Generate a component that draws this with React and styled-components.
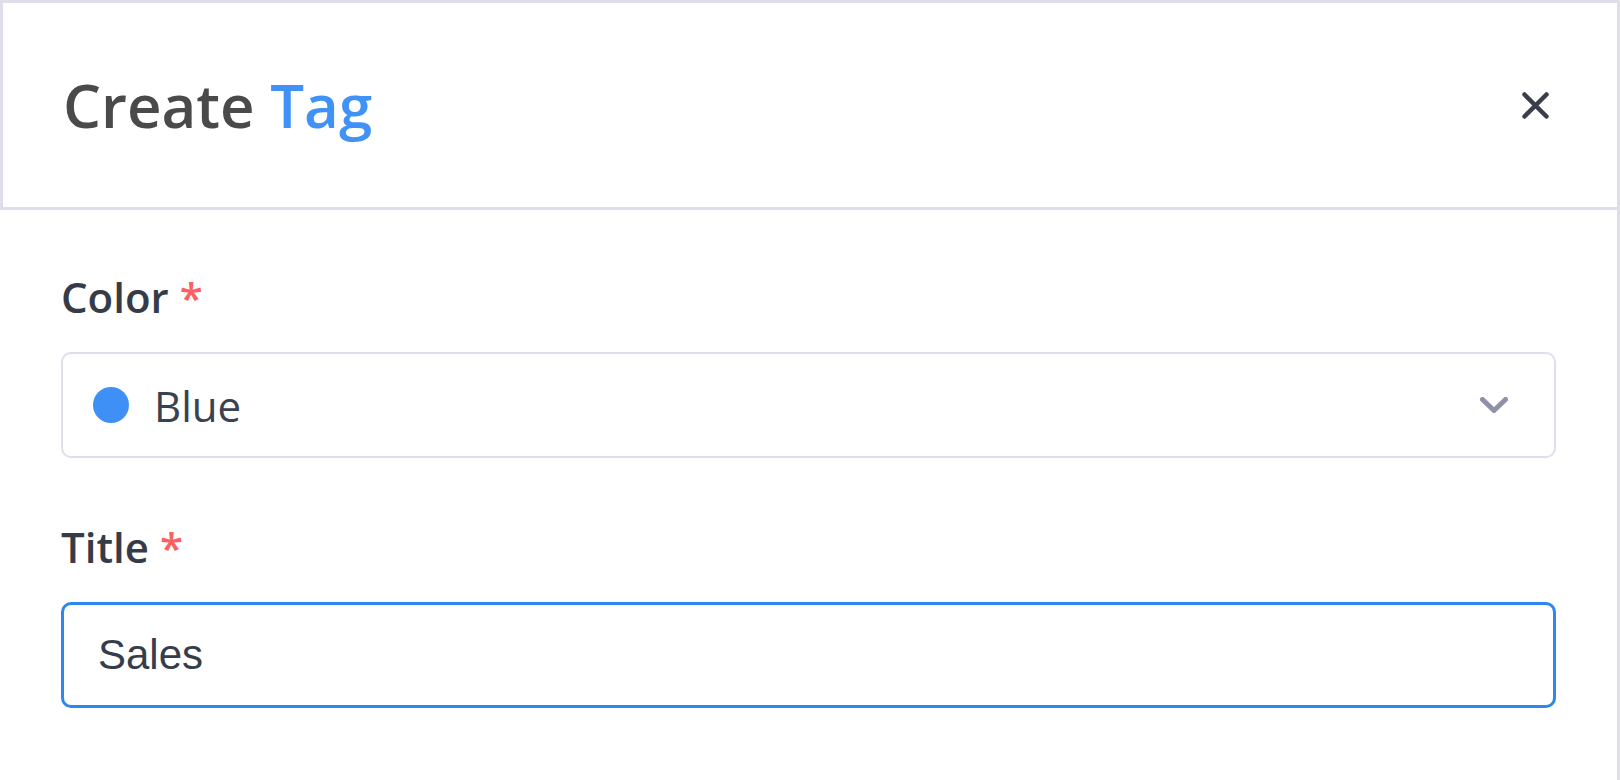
import React from "react";
import styled, { createGlobalStyle } from "styled-components";

const GlobalStyle = createGlobalStyle`
  html, body {
    margin: 0;
    padding: 0;
    background: #ffffff;
  }
  * {
    box-sizing: border-box;
  }
`;

const Modal = styled.div`
  width: 1620px;
  height: 780px;
  display: flex;
  flex-direction: column;
  background: #fff;
  font-family: "Open Sans", "Noto Sans", sans-serif;
`;

const ModalHeader = styled.div`
  height: 210px;
  display: flex;
  align-items: center;
  justify-content: space-between;
  padding: 0 68px 0 60px;
  border: 3px solid #dedde9;
`;

const ModalTitle = styled.h1`
  margin: 0;
  font-size: 60px;
  font-weight: 600;
  color: #4a4a4a;
`;

const Accent = styled.span`
  color: #4192f7;
`;

const CloseButton = styled.button`
  background: none;
  border: none;
  padding: 0;
  cursor: pointer;
  display: flex;
  color: #383e4a;
`;

const ModalBody = styled.div`
  flex: 1;
  padding: 57px 61px 0 61px;
  border-right: 3px solid #dedde9;
  display: flex;
  flex-direction: column;
  gap: 59px;
`;

const Field = styled.div`
  display: flex;
  flex-direction: column;
`;

const Label = styled.label`
  font-size: 42px;
  line-height: 60px;
  font-weight: 600;
  color: #353c48;
  margin-bottom: 25px;
`;

const Required = styled.span`
  color: #fd6060;
  margin-left: 11px;
`;

const SelectBox = styled.div`
  height: 106px;
  display: flex;
  align-items: center;
  padding: 0 46px 0 30px;
  border: 2.5px solid #dfdeea;
  border-radius: 10px;
`;

const Dot = styled.span`
  width: 36px;
  height: 36px;
  border-radius: 50%;
  background: ${(p) => p.color};
  margin-right: 25px;
  flex-shrink: 0;
`;

const SelectValue = styled.span`
  flex: 1;
  font-size: 42px;
  color: #3a4150;
`;

const TextInput = styled.input`
  height: 106px;
  width: 100%;
  padding: 0 34px;
  border: 3px solid #2d87f0;
  border-radius: 10px;
  outline: none;
  font-family: "Liberation Sans", Arial, sans-serif;
  font-size: 42px;
  color: #363d4a;
`;

function CloseIcon() {
  return (
    <svg width="27" height="27" viewBox="0 0 27 27" fill="none">
      <path
        d="M2.5 2.5 L24.5 24.5 M24.5 2.5 L2.5 24.5"
        stroke="currentColor"
        strokeWidth="4.5"
        strokeLinecap="round"
      />
    </svg>
  );
}

function ChevronIcon() {
  return (
    <svg width="28" height="16" viewBox="0 0 28 16" fill="none">
      <path
        d="M2.5 2.5 L14 13.5 L25.5 2.5"
        stroke="#8f91a9"
        strokeWidth="5"
        strokeLinecap="round"
        strokeLinejoin="round"
      />
    </svg>
  );
}

export default function App() {
  return (
    <>
      <GlobalStyle />
      <Modal>
        <ModalHeader>
          <ModalTitle>
            Create <Accent>Tag</Accent>
          </ModalTitle>
          <CloseButton aria-label="Close">
            <CloseIcon />
          </CloseButton>
        </ModalHeader>
        <ModalBody>
          <Field>
            <Label>
              Color<Required>*</Required>
            </Label>
            <SelectBox>
              <Dot color="#3e90f7" />
              <SelectValue>Blue</SelectValue>
              <ChevronIcon />
            </SelectBox>
          </Field>
          <Field>
            <Label>
              Title<Required>*</Required>
            </Label>
            <TextInput defaultValue="Sales" />
          </Field>
        </ModalBody>
      </Modal>
    </>
  );
}
